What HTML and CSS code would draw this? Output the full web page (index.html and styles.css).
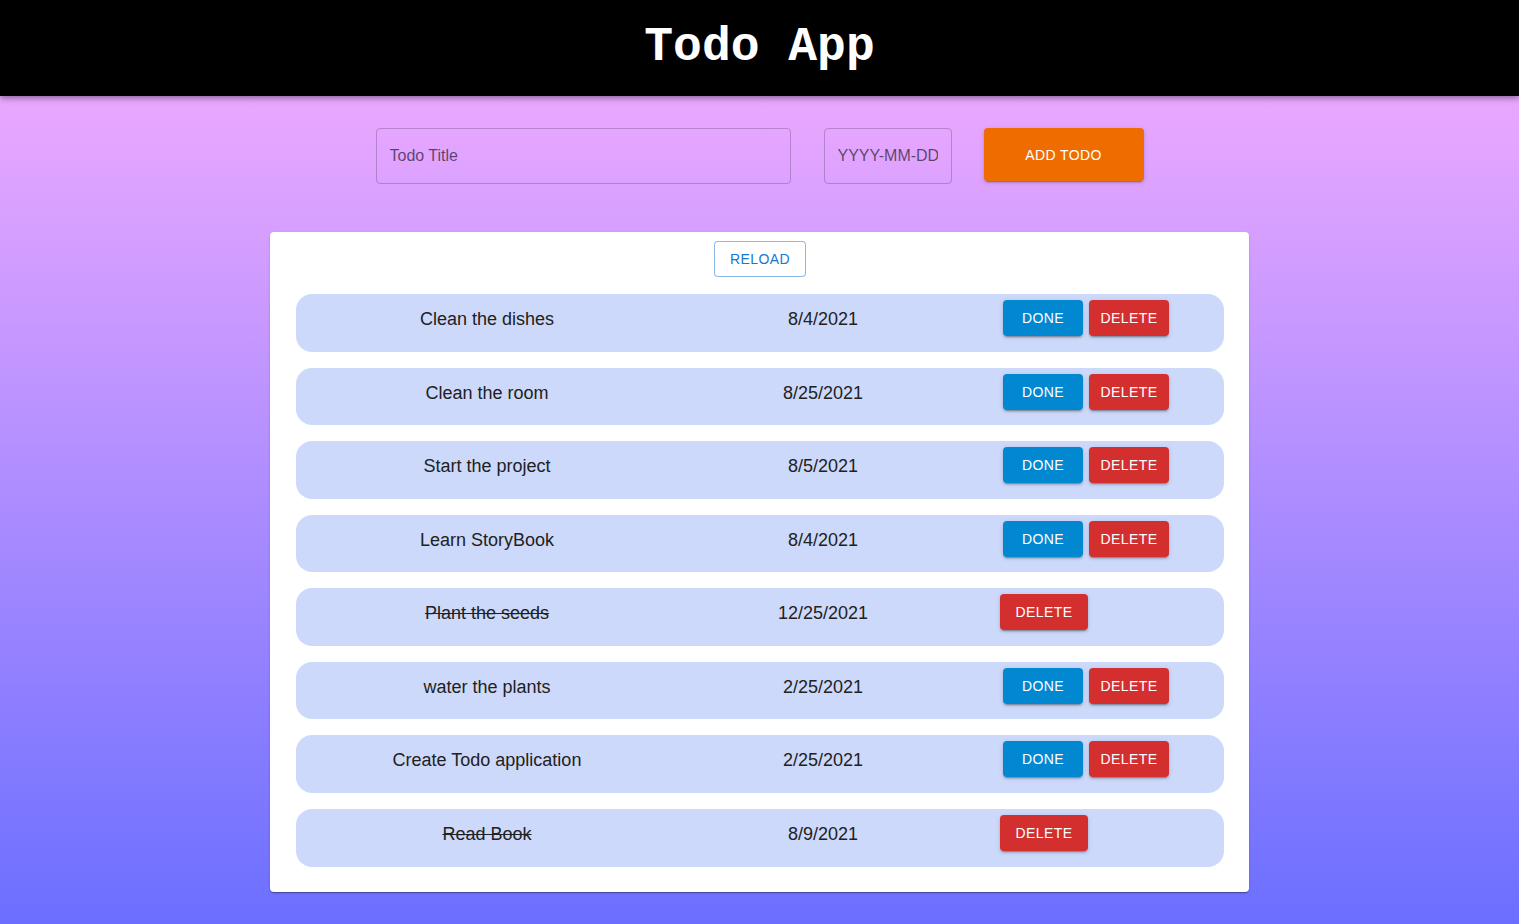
FILE: index.html
```html
<!DOCTYPE html>
<html lang="en">
<head>
<meta charset="utf-8">
<title>Todo App</title>
<link rel="stylesheet" href="styles.css">
</head>
<body>
<header class="app-bar">
  <h1 class="app-title">Todo App</h1>
</header>
<main class="main">
  <form class="add-form">
    <input class="field field-title" type="text" placeholder="Todo Title">
    <input class="field field-date" type="text" placeholder="YYYY-MM-DD">
    <button class="btn btn-add" type="button">Add Todo</button>
  </form>
  <section class="card">
    <div class="reload-wrap">
      <button class="btn btn-reload" type="button">Reload</button>
    </div>
    <ul class="todo-list">
      <li class="todo">
        <span class="todo-title">Clean the dishes</span>
        <span class="todo-date">8/4/2021</span>
        <span class="todo-actions"><button class="btn btn-done">Done</button><button class="btn btn-delete">Delete</button></span>
      </li>
      <li class="todo">
        <span class="todo-title">Clean the room</span>
        <span class="todo-date">8/25/2021</span>
        <span class="todo-actions"><button class="btn btn-done">Done</button><button class="btn btn-delete">Delete</button></span>
      </li>
      <li class="todo">
        <span class="todo-title">Start the project</span>
        <span class="todo-date">8/5/2021</span>
        <span class="todo-actions"><button class="btn btn-done">Done</button><button class="btn btn-delete">Delete</button></span>
      </li>
      <li class="todo">
        <span class="todo-title">Learn StoryBook</span>
        <span class="todo-date">8/4/2021</span>
        <span class="todo-actions"><button class="btn btn-done">Done</button><button class="btn btn-delete">Delete</button></span>
      </li>
      <li class="todo todo-completed">
        <span class="todo-title">Plant the seeds</span>
        <span class="todo-date">12/25/2021</span>
        <span class="todo-actions"><button class="btn btn-delete btn-delete-solo">Delete</button></span>
      </li>
      <li class="todo">
        <span class="todo-title">water the plants</span>
        <span class="todo-date">2/25/2021</span>
        <span class="todo-actions"><button class="btn btn-done">Done</button><button class="btn btn-delete">Delete</button></span>
      </li>
      <li class="todo">
        <span class="todo-title">Create Todo application</span>
        <span class="todo-date">2/25/2021</span>
        <span class="todo-actions"><button class="btn btn-done">Done</button><button class="btn btn-delete">Delete</button></span>
      </li>
      <li class="todo todo-completed">
        <span class="todo-title">Read Book</span>
        <span class="todo-date">8/9/2021</span>
        <span class="todo-actions"><button class="btn btn-delete btn-delete-solo">Delete</button></span>
      </li>
    </ul>
  </section>
</main>
</body>
</html>
```

FILE: styles.css
```css
* { box-sizing: border-box; }

html, body {
  margin: 0;
  padding: 0;
  height: 100%;
}

body {
  font-family: "Liberation Sans", Arial, sans-serif;
  background: linear-gradient(180deg, #eca9ff 0px, #eaa8ff 96px, #6b6fff 924px);
  min-height: 924px;
  color: #212121;
}

.app-bar {
  height: 96px;
  background: #000;
  display: flex;
  align-items: center;
  justify-content: center;
  box-shadow: 0 2px 4px -1px rgba(0,0,0,0.2), 0 4px 5px 0 rgba(0,0,0,0.14), 0 1px 10px 0 rgba(0,0,0,0.12);
  position: relative;
  z-index: 1;
}

.app-title {
  margin: 0;
  color: #fff;
  font-family: "Courier New", "Nimbus Mono PS", "FreeMono", "Liberation Mono", monospace;
  font-weight: bold;
  font-size: 48px;
  line-height: 1;
  margin-top: -3px;
}

.main {
  display: flex;
  flex-direction: column;
  align-items: center;
  padding-top: 32px;
}

.add-form {
  display: flex;
  align-items: flex-start;
  gap: 33px;
  margin: 0 0 48px 0;
}

.field {
  height: 56px;
  border: 1px solid rgba(0,0,0,0.2);
  border-radius: 4px;
  background: transparent;
  font-family: "Liberation Sans", Arial, sans-serif;
  font-size: 16px;
  padding: 0 13px;
  color: #212121;
  outline: none;
}

.field::placeholder {
  color: rgba(0,0,0,0.6);
}

.field-title { width: 415px; }
.field-date { width: 128px; }

.btn {
  font-family: "Liberation Sans", Arial, sans-serif;
  font-size: 14px;
  text-transform: uppercase;
  letter-spacing: 0.4px;
  border: none;
  border-radius: 4px;
  cursor: pointer;
  height: 36px;
  padding: 0 16px;
  color: #fff;
  box-shadow: 0 3px 1px -2px rgba(0,0,0,0.2), 0 2px 2px 0 rgba(0,0,0,0.14), 0 1px 5px 0 rgba(0,0,0,0.12);
}

.btn-add {
  width: 160px;
  height: 53px;
  margin-left: -1px;
  background: #ef6c00;
}

.card {
  width: 979px;
  background: #fff;
  border-radius: 4px;
  box-shadow: 0 2px 1px -1px rgba(0,0,0,0.2), 0 1px 1px 0 rgba(0,0,0,0.14), 0 1px 3px 0 rgba(0,0,0,0.12);
  padding: 9px 25px 25px 26px;
}

.reload-wrap {
  display: flex;
  justify-content: center;
  margin-bottom: 17px;
}

.btn-reload {
  width: 92px;
  background: #fff;
  color: #1976d2;
  border: 1px solid rgba(25,118,210,0.5);
  box-shadow: none;
  padding: 0 15px;
}

.todo-list {
  list-style: none;
  margin: 0;
  padding: 0;
  display: flex;
  flex-direction: column;
  gap: 16px;
}

.todo {
  height: 57.57px;
  background: #cdd9fb;
  border-radius: 16px;
  display: grid;
  grid-template-columns: 382px 290px 1fr;
  align-items: start;
  padding-top: 6px;
  font-size: 18px;
  color: #212121;
}

.todo-title,
.todo-date {
  text-align: center;
  line-height: 36px;
  padding-top: 1px;
}

.todo-completed .todo-title {
  text-decoration: line-through;
}

.todo-actions {
  display: flex;
  gap: 6px;
  padding-left: 35px;
}

.btn-done {
  width: 80px;
  padding: 0;
  background: #0288d1;
}

.btn-delete {
  width: 80px;
  padding: 0;
  background: #d32f2f;
}

.todo-completed .todo-actions {
  padding-left: 32px;
}

.btn-delete-solo {
  width: 88px;
}
```
